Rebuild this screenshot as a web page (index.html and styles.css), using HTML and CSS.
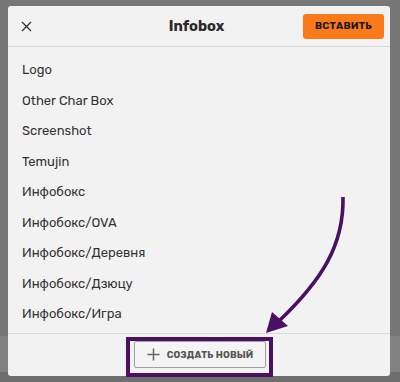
FILE: index.html
```html
<!DOCTYPE html>
<html>
<head>
    <title>Infobox</title>
    <link rel="stylesheet" href="styles.css">
</head>
<body>
    <div class="dialog">
        <div class="dialog-head">
            <button class="close" aria-label="Закрыть">
                <svg width="11" height="11" viewBox="0 0 11 11"><path d="M1 1L10 10M10 1L1 10" stroke="#333" stroke-width="1.3" fill="none"/></svg>
            </button>
            <div class="title">Infobox</div>
            <div class="head-right">
                <button class="insert">ВСТАВИТЬ</button>
            </div>
        </div>
        <ul class="list">
            <li>Logo</li>
            <li>Other Char Box</li>
            <li>Screenshot</li>
            <li>Temujin</li>
            <li>Инфобокс</li>
            <li>Инфобокс/OVA</li>
            <li>Инфобокс/Деревня</li>
            <li>Инфобокс/Дзюцу</li>
            <li>Инфобокс/Игра</li>
        </ul>
        <div class="dialog-foot">
            <button class="create">
                <svg width="13" height="13" viewBox="0 0 13 13"><path d="M6.5 0.5V12.5M0.5 6.5H12.5" stroke="#666" stroke-width="1.5" fill="none"/></svg>
                <span>СОЗДАТЬ НОВЫЙ</span>
            </button>
        </div>
    </div>

    <!-- пометки поверх скриншота -->
    <div class="mark-box"></div>
    <svg class="mark-arrow" width="400" height="382" viewBox="0 0 400 382">
        <path d="M343 197 C344 245 322 280 279 321" stroke="#4a1062" stroke-width="3.6" fill="none"/>
        <polygon points="266,333 272,312 288,326" fill="#4a1062"/>
    </svg>
</body>
</html>
```

FILE: styles.css
```css
body {
    margin: 0;
    height: 382px;
    overflow: hidden;
    position: relative;
    font-family: Rubik, Inter, "Noto Sans", sans-serif;
    background: linear-gradient(#777 0, #777 336px, #828282 336px, #828282 372px, #6e6e6e 372px);
}
.dialog {
    margin: 6px 10px 0 8px;
    height: 370px;
    background-color: #f2f2f2;
    border-radius: 3px;
    display: flex;
    flex-direction: column;
    overflow: hidden;
}
.dialog-head {
    height: 40px;
    flex: none;
    display: grid;
    grid-template-columns: 1fr auto 1fr;
    align-items: center;
    padding: 0 6px 0 13px;
    border-bottom: 1px solid #dadada;
}
.close {
    justify-self: start;
    background: none;
    border: none;
    padding: 0;
    width: 11px;
    height: 11px;
    display: flex;
}
.title {
    font-size: 14.5px;
    font-weight: 700;
    color: #2a2a2a;
    padding-right: 12px;
}
.head-right {
    display: flex;
    justify-content: flex-end;
}
.insert {
    width: 81px;
    height: 25px;
    background-color: #fa7a1a;
    border: none;
    border-radius: 3px;
    font-family: inherit;
    font-size: 10px;
    font-weight: 700;
    letter-spacing: 0.2px;
    color: #1a1a1a;
}
.list {
    flex: 1;
    margin: 0;
    padding: 8px 0 0 14px;
    list-style: none;
    overflow: hidden;
}
.list li {
    line-height: 30.5px;
    font-size: 13px;
    color: #333;
}
.dialog-foot {
    height: 41px;
    flex: none;
    border-top: 1px solid #dadada;
    display: flex;
    justify-content: center;
    align-items: center;
    padding-left: 2px;
    padding-bottom: 1px;
}
.create {
    width: 132px;
    height: 27px;
    padding: 0;
    display: flex;
    align-items: center;
    justify-content: center;
    gap: 7px;
    white-space: nowrap;
    background-color: #f4f4f4;
    border: 1px solid #a0a0a0;
    border-radius: 2px;
    font-family: inherit;
    font-size: 9.5px;
    font-weight: 700;
    letter-spacing: 0.1px;
    color: #555;
}
.mark-box {
    position: absolute;
    left: 126px;
    top: 337px;
    width: 139px;
    height: 32px;
    border: 4px solid #4a1062;
}
.mark-arrow {
    position: absolute;
    left: 0;
    top: 0;
}
```
